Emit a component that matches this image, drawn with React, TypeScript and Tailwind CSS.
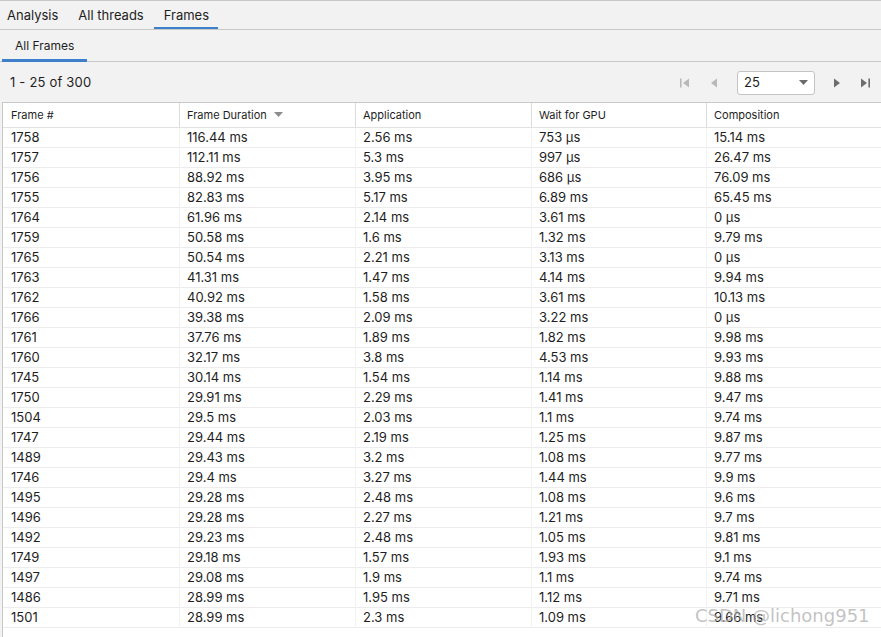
import React from "react";

const rows: string[][] = [
  ["1758", "116.44 ms", "2.56 ms", "753 µs", "15.14 ms"],
  ["1757", "112.11 ms", "5.3 ms", "997 µs", "26.47 ms"],
  ["1756", "88.92 ms", "3.95 ms", "686 µs", "76.09 ms"],
  ["1755", "82.83 ms", "5.17 ms", "6.89 ms", "65.45 ms"],
  ["1764", "61.96 ms", "2.14 ms", "3.61 ms", "0 µs"],
  ["1759", "50.58 ms", "1.6 ms", "1.32 ms", "9.79 ms"],
  ["1765", "50.54 ms", "2.21 ms", "3.13 ms", "0 µs"],
  ["1763", "41.31 ms", "1.47 ms", "4.14 ms", "9.94 ms"],
  ["1762", "40.92 ms", "1.58 ms", "3.61 ms", "10.13 ms"],
  ["1766", "39.38 ms", "2.09 ms", "3.22 ms", "0 µs"],
  ["1761", "37.76 ms", "1.89 ms", "1.82 ms", "9.98 ms"],
  ["1760", "32.17 ms", "3.8 ms", "4.53 ms", "9.93 ms"],
  ["1745", "30.14 ms", "1.54 ms", "1.14 ms", "9.88 ms"],
  ["1750", "29.91 ms", "2.29 ms", "1.41 ms", "9.47 ms"],
  ["1504", "29.5 ms", "2.03 ms", "1.1 ms", "9.74 ms"],
  ["1747", "29.44 ms", "2.19 ms", "1.25 ms", "9.87 ms"],
  ["1489", "29.43 ms", "3.2 ms", "1.08 ms", "9.77 ms"],
  ["1746", "29.4 ms", "3.27 ms", "1.44 ms", "9.9 ms"],
  ["1495", "29.28 ms", "2.48 ms", "1.08 ms", "9.6 ms"],
  ["1496", "29.28 ms", "2.27 ms", "1.21 ms", "9.7 ms"],
  ["1492", "29.23 ms", "2.48 ms", "1.05 ms", "9.81 ms"],
  ["1749", "29.18 ms", "1.57 ms", "1.93 ms", "9.1 ms"],
  ["1497", "29.08 ms", "1.9 ms", "1.1 ms", "9.74 ms"],
  ["1486", "28.99 ms", "1.95 ms", "1.12 ms", "9.71 ms"],
  ["1501", "28.99 ms", "2.3 ms", "1.09 ms", "9.66 ms"],
];

const headers = ["Frame #", "Frame Duration", "Application", "Wait for GPU", "Composition"];

function FirstIcon({ color }: { color: string }) {
  return (
    <svg width="10" height="10" viewBox="0 0 10 10">
      <rect x="0" y="0.5" width="1.6" height="9" fill={color} />
      <path d="M9 0.5 L9 9.5 L3 5 Z" fill={color} />
    </svg>
  );
}
function PrevIcon({ color }: { color: string }) {
  return (
    <svg width="8" height="10" viewBox="0 0 8 10">
      <path d="M7 0.5 L7 9.5 L1 5 Z" fill={color} />
    </svg>
  );
}
function NextIcon({ color }: { color: string }) {
  return (
    <svg width="8" height="10" viewBox="0 0 8 10">
      <path d="M1 0.5 L1 9.5 L7 5 Z" fill={color} />
    </svg>
  );
}
function LastIcon({ color }: { color: string }) {
  return (
    <svg width="10" height="10" viewBox="0 0 10 10">
      <path d="M1 0.5 L1 9.5 L7 5 Z" fill={color} />
      <rect x="8.4" y="0.5" width="1.6" height="9" fill={color} />
    </svg>
  );
}

export default function App() {
  return (
    <div
      className="relative w-[881px] h-[637px] overflow-hidden bg-[#f2f2f2] text-[#1e1e1e]"
      style={{ fontFamily: "Inter, 'Liberation Sans', sans-serif" }}
    >
      {/* Top tabs */}
      <div className="flex h-[30px] border-t border-b border-[#c8c8c8] text-[13px]">
        <div className="flex items-center pt-[2px] pl-[7px] pr-[10px] h-full">Analysis</div>
        <div className="flex items-center pt-[2px] pl-[10px] pr-[10px] h-full">All threads</div>
        <div className="relative flex items-center pt-[2px] pl-[10px] pr-[9px] h-full">
          Frames
          <div className="absolute left-0 right-0 bottom-0 h-[2px] bg-[#3e7fcc]" />
        </div>
      </div>
      {/* Sub tabs */}
      <div className="flex h-[32px] border-b border-[#c8c8c8] pl-[2px] text-[12px]">
        <div className="relative flex items-center px-[13px] h-full">
          All Frames
          <div className="absolute left-0 right-0 bottom-[-1px] h-[3px] bg-[#3e7fcc]" />
        </div>
      </div>
      {/* Toolbar */}
      <div className="flex items-center h-[40px] pt-[2px] pl-[10px] pr-[11px] text-[13px]">
        <div className="tracking-[0.2px]">1 - 25 of 300</div>
        <div className="ml-auto flex items-center">
          <div className="w-[10px] flex justify-center">
            <FirstIcon color="#b9b9b9" />
          </div>
          <div className="ml-[20px] w-[8px] flex justify-center">
            <PrevIcon color="#b9b9b9" />
          </div>
          <div className="ml-[19px] flex items-center w-[78px] h-[24px] bg-white border border-[#c4c4c4] rounded-[3px] pl-[6px] pr-[6px]">
            <span>25</span>
            <svg className="ml-auto" width="9" height="6" viewBox="0 0 9 6">
              <path d="M0 0 L9 0 L4.5 5 Z" fill="#6b6b6b" />
            </svg>
          </div>
          <div className="ml-[18px] w-[8px] flex justify-center">
            <NextIcon color="#6d6d6d" />
          </div>
          <div className="ml-[19px] w-[10px] flex justify-center">
            <LastIcon color="#6d6d6d" />
          </div>
        </div>
      </div>
      {/* Table */}
      <div className="ml-[2px] h-[535px] bg-white border-t border-l border-[#c8c8c8]">
        <div className="grid grid-cols-[177px_176px_176px_175px_1fr] h-[25px] border-b border-[#e2e2e2] text-[11px]">
          {headers.map((h, i) => (
            <div
              key={h}
              className={
                "flex items-center " +
                (i === 0 ? "pl-[8px] " : "pl-[7px] ") +
                (i < 4 ? "border-r border-[#dcdcdc]" : "")
              }
            >
              <span>{h}</span>
              {i === 1 && (
                <svg className="ml-[7px]" width="9" height="6" viewBox="0 0 9 6">
                  <path d="M0 0 L9 0 L4.5 5 Z" fill="#8c8c8c" />
                </svg>
              )}
            </div>
          ))}
        </div>
        {rows.map((r, ri) => (
          <div
            key={ri}
            className="grid grid-cols-[177px_176px_176px_175px_1fr] h-[20px] border-b border-[#ececec] text-[13px]"
          >
            {r.map((c, ci) => (
              <div
                key={ci}
                className={
                  "flex items-center " +
                  (ci === 0 ? "pl-[8px] " : "pl-[7px] ") +
                  (ci < 4 ? "border-r border-[#f3f3f3]" : "")
                }
              >
                {c}
              </div>
            ))}
          </div>
        ))}
      </div>
      {/* Watermark */}
      <div
        className="absolute left-[695px] top-[604px] whitespace-nowrap text-[18px] leading-[24px] text-[#a8a8a8]/70 pointer-events-none"
        style={{ fontFamily: "'DejaVu Sans', sans-serif" }}
      >
        CSDN @lichong951
      </div>
    </div>
  );
}
